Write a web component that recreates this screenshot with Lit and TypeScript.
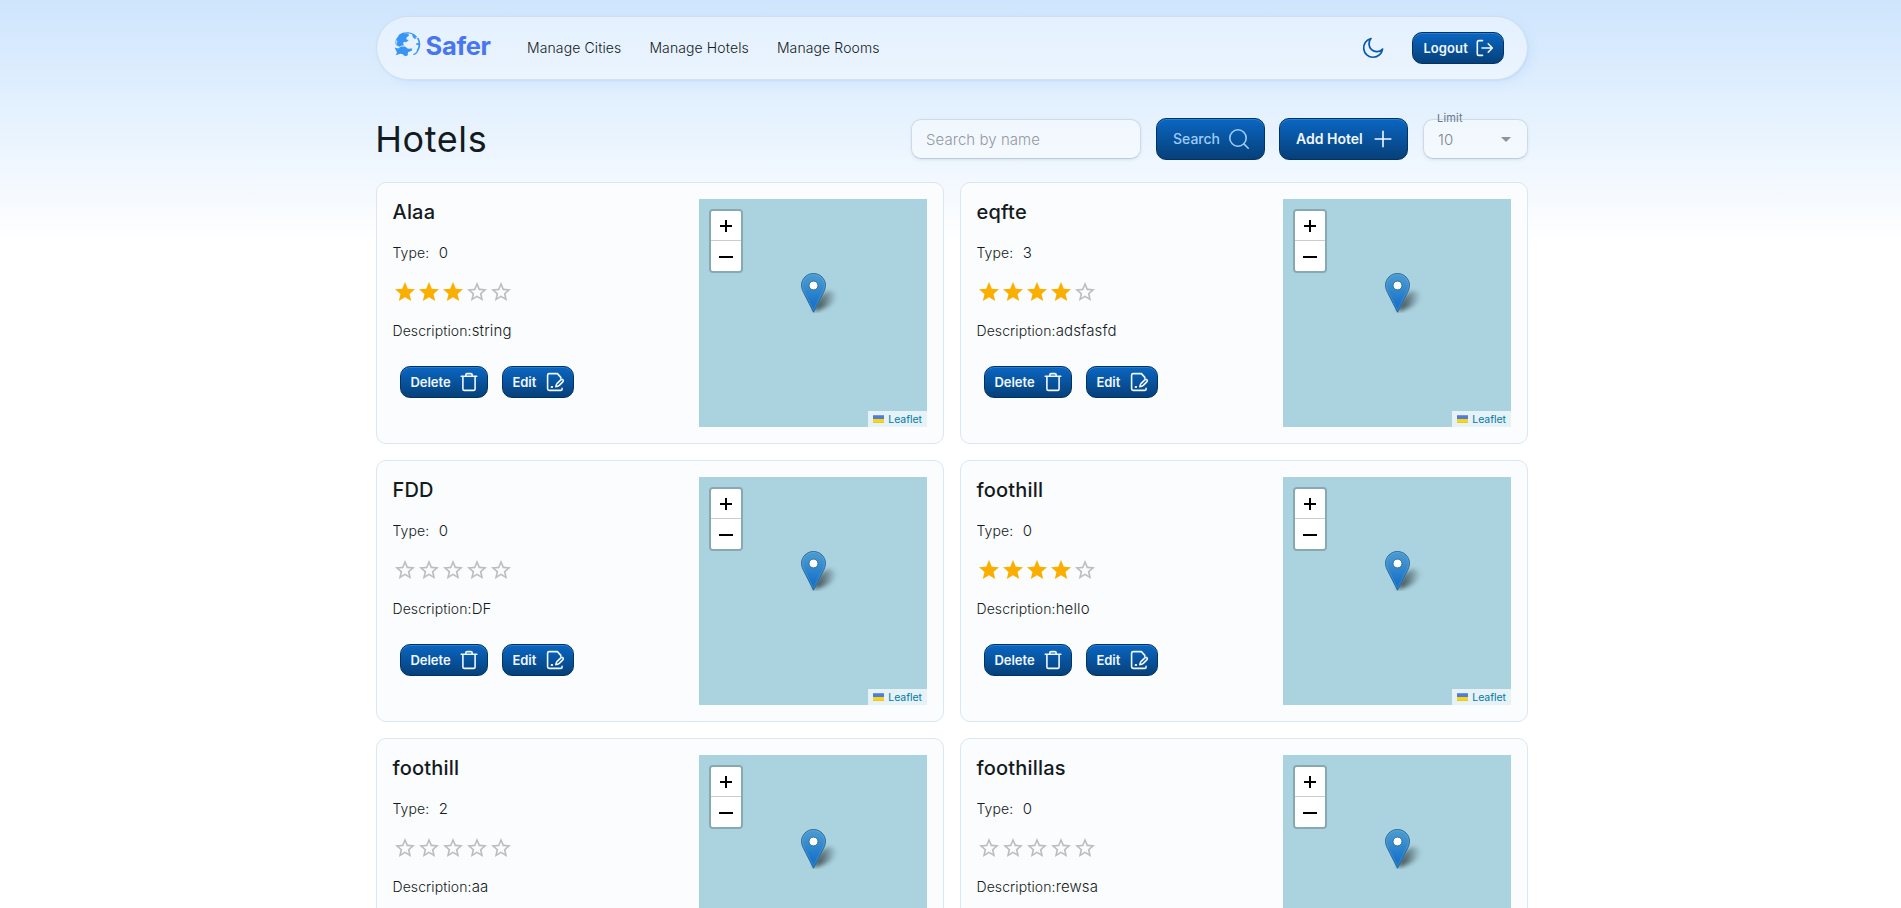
import { LitElement, html, css, svg } from "lit";
import { customElement, property } from "lit/decorators.js";

interface Hotel {
  name: string;
  type: number;
  stars: number;
  description: string;
}

const HOTELS: Hotel[] = [
  { name: "Alaa", type: 0, stars: 3, description: "string" },
  { name: "eqfte", type: 3, stars: 4, description: "adsfasfd" },
  { name: "FDD", type: 0, stars: 0, description: "DF" },
  { name: "foothill", type: 0, stars: 4, description: "hello" },
  { name: "foothill", type: 2, stars: 0, description: "aa" },
  { name: "foothillas", type: 0, stars: 0, description: "rewsa" },
];

const ICONS: Record<string, unknown> = {
  logout: svg`<path d="M8.5 2.6H5A1.7 1.7 0 0 0 3.3 4.3v11.4A1.7 1.7 0 0 0 5 17.4h3.5M8 10h9.8M14.2 5.8 18.3 10l-4.1 4.2"/>`,
  search: svg`<circle cx="9" cy="9" r="8.2"/><path d="m14.9 14.9 4.300 4.300"/>`,
  plus: svg`<path d="M10 2.2v15.6M2.2 10h15.6"/>`,
  trash: svg`<path d="M2.2 4.3h15.6M3.9 4.3v12.6c0 .9.6 1.5 1.5 1.5h9.2c.9 0 1.5-.6 1.5-1.5V4.3M6.8 4.1V3c0-.8.6-1.4 1.4-1.4h3.6c.8 0 1.4.6 1.4 1.4v1.1"/>`,
  edit: svg`<path d="M15.800 6.200V5.400L12.400 1.600H4.200c-.9 0-1.600.7-1.600 1.600v13.600c0 .9.7 1.600 1.600 1.600h11.500c.9 0 1.400-.5 1.400-1.400v-.6"/><path d="M10.800 14.800c.2-1.500.6-2.700 1.400-3.500l3.600-3.400c.7-.7 1.500-.7 2.100-.1.600.6.600 1.400-.1 2.100l-3.500 3.500c-.9.8-2 1.300-3.500 1.400z"/><path d="M6.600 15h.6" stroke-width="2"/>`,
};

@customElement("blue-button")
class BlueButton extends LitElement {
  @property() label = "";
  @property() icon = "";
  @property() size = "small";
  static styles = css`
    :host { display: block; }
    .btn {
      display: flex; align-items: center; justify-content: space-between;
      box-sizing: border-box; width: 100%; height: 32px; padding: 0 8px 0 9.4px; margin: 0;
      border: 1px solid #033363; border-radius: 10px;
      background: linear-gradient(to bottom, #0a66c2, #064079);
      box-shadow: inset 0 1px rgba(85, 166, 246, 0.4);
      color: #f0f7ff; font: 600 13px/20px Inter, sans-serif;
    }
    .logout { padding-left: 10.4px; padding-right: 9px; letter-spacing: 0.1px; }
    .large { height: 42px; padding: 0 14px 0 16px; font-size: 14px; }
    .search { color: #9cccfc; font-weight: 500; padding-right: 15px; }
    svg { width: 20px; height: 20px; fill: none; stroke: currentColor; stroke-width: 1.6; stroke-linecap: round; stroke-linejoin: round; }
  `;
  render() {
    return html`<button class="btn ${this.size} ${this.icon}">
      <span>${this.label}</span><svg viewBox="0 0 20 20">${ICONS[this.icon]}</svg>
    </button>`;
  }
}

@customElement("hotel-map")
class HotelMap extends LitElement {
  static styles = css`
    :host { display: block; width: 228px; height: 228px; position: relative; background: #aad3df; flex: none; overflow: hidden; }
    .zoom { position: absolute; left: 10px; top: 10px; border: 2px solid rgba(0, 0, 0, 0.2); border-radius: 4px; background-clip: padding-box; width: 30px; }
    .key { display: flex; box-sizing: border-box; align-items: center; justify-content: center; height: 30px; background: #fff; border-radius: 0 0 2px 2px; }
    .key.in { border-bottom: 1px solid #ccc; border-radius: 2px 2px 0 0; height: 30px; }
    .key svg { width: 14px; height: 14px; display: block; stroke: #000; stroke-width: 2; }
    .marker { position: absolute; left: 102px; top: 74px; width: 25px; height: 40px; }
    .shade { position: absolute; left: 102px; top: 73px; width: 44px; height: 41px; }
    .credit {
      position: absolute; right: 0; bottom: 0; height: 16px; display: flex; align-items: center; gap: 4px; box-sizing: border-box; width: 59px;
      padding: 0 5px; background: rgba(255, 255, 255, 0.7); color: #0078a8; font: 400 10.5px/16px Inter, sans-serif;
    }
    .credit span { padding-top: 1px; letter-spacing: -0.05px; }
    .flag { width: 12px; height: 8px; display: block; }
  `;
  render() {
    return html`
      <svg class="shade" viewBox="0 0 44 41">
        <defs>
          <filter id="b" x="-30%" y="-30%" width="160%" height="160%"><feGaussianBlur stdDeviation="2" /></filter>
          <linearGradient id="s" x1="0" y1="0" x2="1" y2="0"><stop offset="0" stop-opacity=".7" /><stop offset=".45" stop-opacity=".42" /><stop offset=".8" stop-opacity=".15" /><stop offset="1" stop-opacity=".03" /></linearGradient>
        </defs>
        <path d="M12.500 39.500C15 32 18 22 27 19.500c7-1 11 3 7 9-4 6-13 9-21.500 11z" fill="url(#s)" filter="url(#b)" />
      </svg>
      <svg class="marker" viewBox="0 0 25 41" preserveAspectRatio="none">
        <defs><linearGradient id="m" x1="0" y1="0" x2="0" y2="1"><stop offset="0" stop-color="#4a9bd3" /><stop offset=".25" stop-color="#3f92cf" /><stop offset=".75" stop-color="#1b75cb" /><stop offset="1" stop-color="#126fc6" /></linearGradient></defs>
        <path d="M12.500.5C5.900.5.500 5.900.500 12.600c0 3 1.100 5.500 2.200 7.700L12.500 40.200l9.800-19.900c1.100-2.200 2.200-4.700 2.200-7.700C24.500 5.900 19.100.5 12.500.5z" fill="url(#m)" stroke="#2e6c97" />
        <path d="M12.500 1.600C6.500 1.600 1.600 6.500 1.600 12.600c0 2.700 1 5.100 2 7.100l8.900 18 8.900-18c1-2 2-4.400 2-7.100 0-6.100-4.900-11-10.900-11z" fill="none" stroke="#fff" stroke-opacity=".12" />
        <circle cx="12.500" cy="12.800" r="4.500" fill="#fff" stroke="#2e6c97" stroke-width="1" />
      </svg>
      <div class="zoom">
        <div class="key in"><svg viewBox="0 0 14 14"><path d="M7 1v12M1 7h12" /></svg></div>
        <div class="key"><svg viewBox="0 0 14 14"><path d="M0 8h14" /></svg></div>
      </div>
      <div class="credit">
        <svg class="flag" viewBox="0 0 12 8"><path fill="#4c7be1" d="M0 0h12v4H0z" /><path fill="#ffd500" d="M0 4h12v3H0z" /><path fill="#e0bc00" d="M0 7h12v1H0z" /></svg>
        <span>Leaflet</span>
      </div>`;
  }
}

@customElement("hotel-card")
class HotelCard extends LitElement {
  @property({ attribute: false }) hotel!: Hotel;
  static styles = css`
    :host { display: block; }
    .card {
      display: flex; justify-content: space-between; box-sizing: border-box; height: 262px; padding: 16px;
      border: 1px solid #dae6f1; border-radius: 10px; background: #fbfcfe;
      font: 400 14px/21px Inter, sans-serif; color: #131b20;
    }
    .info { display: flex; flex-direction: column; align-items: flex-start; margin-left: -0.5px; }
    h2 { margin: -3px 0 0; font-size: 20px; font-weight: 500; line-height: 32px; letter-spacing: 0.2px; }
    .row { font-weight: 300; white-space: pre; height: 21px; letter-spacing: 0.09px; }
    .type { margin-top: 14px; }
    .value { margin-left: 9.5px; font-size: 15px; }
    .text { font-size: 15px; letter-spacing: 0.15px; }
    .stars { display: flex; margin: 15px 0 0 0.5px; height: 28px; align-items: center; }
    .stars svg { width: 24px; height: 24px; display: block; fill: #bdbdbd; }
    .stars .full { fill: #faaf00; }
    .desc { margin-top: 14px; }
    .actions { display: flex; gap: 14px; margin: 25px 0 0 7.5px; }
    .del { width: 88px; }
    .edit { width: 72px; }
  `;
  render() {
    const h = this.hotel;
    return html`<article class="card">
      <div class="info">
        <h2>${h.name}</h2>
        <div class="row type">Type:<span class="value">${h.type}</span></div>
        <div class="stars">
          ${[0, 1, 2, 3, 4].map((i) =>
            i < h.stars
              ? html`<svg class="full" viewBox="0 0 24 24"><path d="M12 17.270 18.180 21l-1.640-7.030L22 9.240l-7.190-.61L12 2 9.190 8.630 2 9.240l5.460 4.730L5.820 21z" /></svg>`
              : html`<svg viewBox="0 0 24 24"><path d="m22 9.240-7.190-.62L12 2 9.190 8.630 2 9.240l5.460 4.730L5.820 21 12 17.270 18.180 21l-1.630-7.030L22 9.240zM12 15.400l-3.760 2.270 1-4.280-3.320-2.880 4.380-.38L12 6.100l1.710 4.040 4.380.38-3.320 2.880 1 4.280L12 15.400z" /></svg>`
          )}
        </div>
        <div class="row desc">Description:<span class="text">${h.description}</span></div>
        <div class="actions">
          <blue-button class="del" label="Delete" icon="trash"></blue-button>
          <blue-button class="edit" label="Edit" icon="edit"></blue-button>
        </div>
      </div>
      <hotel-map></hotel-map>
    </article>`;
  }
}

@customElement("app-root")
class AppRoot extends LitElement {
  static styles = css`
    :host {
      display: block; height: 908px; overflow: hidden; font-family: Inter, sans-serif; color: #131b20;
      background: linear-gradient(180deg, #cee5fd, #fff) no-repeat 0 0 / 100% 244px #fff;
    }
    .page { width: 1152px; margin-left: 376px; padding-top: 16px; }
    .bar {
      box-sizing: border-box; height: 64px; display: flex; align-items: center; padding: 0 23px 0 17px;
      border: 1px solid rgba(191, 204, 217, 0.5); border-radius: 999px; background: rgba(255, 255, 255, 0.4);
      box-shadow: 0 0 1px rgba(85, 166, 246, 0.1), 1px 1.5px 2px -1px rgba(85, 166, 246, 0.15), 4px 4px 12px -2.5px rgba(85, 166, 246, 0.15);
    }
    .globe { width: 27px; height: 25px; display: block; margin: -7px 4.5px 0 0; }
    .brand { font-size: 25.5px; font-weight: 700; color: #4876ee; line-height: 32px; width: 64.5px; margin-top: -5px; letter-spacing: -0.3px; }
    nav { display: flex; gap: 28px; margin: -2px 0 0 37px; font-size: 14px; font-weight: 300; line-height: 21px; letter-spacing: 0.11px; }
    .moon { width: 22px; height: 22px; display: block; margin: 0 28px 0 auto; fill: none; stroke: #0959aa; stroke-width: 1.7; stroke-linejoin: round; }
    .logout { width: 92px; }
    .tools { display: flex; align-items: center; height: 42px; margin: 38px 0 22px; }
    h1 { font-size: 36px; font-weight: 400; line-height: 43px; margin: 0 auto 0 -0.8px; letter-spacing: 0.6px; }
    .field {
      box-sizing: border-box; height: 40px; border: 1px solid #cddbe7; border-bottom-color: #bccbdc; border-radius: 10px; background: rgba(255, 255, 255, 0.4);
      box-shadow: 0 1px 3px rgba(100, 130, 160, 0.16); display: flex; align-items: center; padding: 0 14px;
      color: #94999f; font-size: 15px; font-weight: 300; letter-spacing: 0.05px;
    }
    .query { width: 230px; margin-right: 15px; }
    .search { width: 109px; margin-right: 14px; }
    .add { width: 129px; margin-right: 15px; }
    .limit { width: 105px; position: relative; justify-content: space-between; padding-right: 16px; color: #808489; }
    .caption { position: absolute; left: 13px; top: -9px; font-size: 11px; line-height: 14px; font-weight: 400; color: #66788a; letter-spacing: 0.2px; }
    .arrow { width: 10px; height: 5px; display: block; fill: #8e9399; }
    .grid { display: grid; grid-template-columns: 568px 568px; gap: 16px; }
  `;
  render() {
    return html`<div class="page">
      <header class="bar">
        <svg class="globe" viewBox="12 7.5 81 75">
          <g fill="none" stroke="#3995f5" stroke-linecap="round">
            <path d="M28 17C42 7 66 7 79 22" stroke-width="3.500" />
            <path d="M84 27c6 12 5 27-2 38" stroke-width="5" />
            <path d="M21 27c-4 7-4 11-3 17" stroke-width="2.500" />
            <path d="M81 68c-3 4-6 6-10 7" stroke-width="3.500" />
          </g>
          <g fill="#3995f5">
            <path d="M28 16 38 12l17 1 2 6-7 4-1 6 7 3-8 6-6-1-3 6 4 4-9 2-6 3-9-5 3-10-2-10z" />
            <path d="M14 54l11 3 8-6 12 0 9 7 13-1-2 7-11 4-1 10-8 2-7-6-7-1-14 4 4-8z" />
            <path d="M66 14l9 5 4 8-6 1-5-6z" />
            <path d="M78 41l9 0 0 6-8-1z" />
          </g>
        </svg>
        <div class="brand">Safer</div>
        <nav><span>Manage Cities</span><span>Manage Hotels</span><span>Manage Rooms</span></nav>
        <svg class="moon" viewBox="0 0 22 22"><path d="M9 1.500A9.500 9.500 0 1 0 20.600 12 7 7 0 0 1 9 1.500z" /></svg>
        <blue-button class="logout" label="Logout" icon="logout"></blue-button>
      </header>
      <section class="tools">
        <h1>Hotels</h1>
        <div class="field query">Search by name</div>
        <blue-button class="search" size="large" label="Search" icon="search"></blue-button>
        <blue-button class="add" size="large" label="Add Hotel" icon="plus"></blue-button>
        <div class="field limit"><span class="caption">Limit</span><span>10</span><svg class="arrow" viewBox="0 0 10 5"><path d="M0 0h10L5 5z" /></svg></div>
      </section>
      <main class="grid">${HOTELS.map((h) => html`<hotel-card .hotel=${h}></hotel-card>`)}</main>
    </div>`;
  }
}
